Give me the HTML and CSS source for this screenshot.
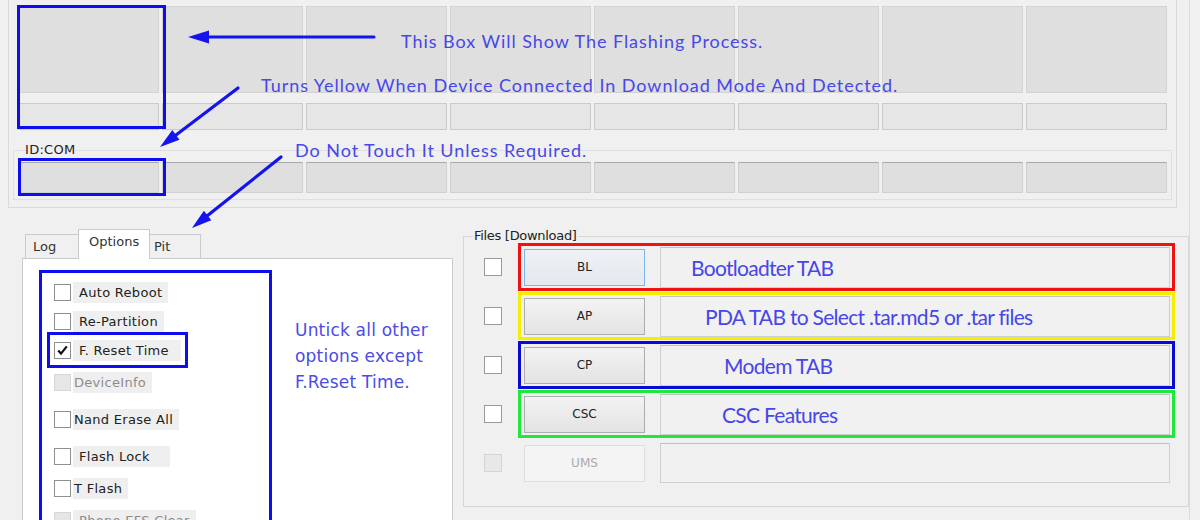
FILE: index.html
```html
<!DOCTYPE html>
<html lang="en">
<head>
    <meta charset="UTF-8">
    <meta name="viewport" content="width=device-width, initial-scale=1.0">
    <title>Odin - Options</title>
    <link rel="stylesheet" href="styles.css">
</head>
<body>

<div class="page">
    <div class="window">

        <!-- Device status boxes -->
        <div class="top-frame">
            <div class="cells">
                <div class="cell cell-big"></div>
                <div class="cell cell-big"></div>
                <div class="cell cell-big"></div>
                <div class="cell cell-big"></div>
                <div class="cell cell-big"></div>
                <div class="cell cell-big"></div>
                <div class="cell cell-big"></div>
                <div class="cell cell-big"></div>
                <div class="cell cell-small"></div>
                <div class="cell cell-small"></div>
                <div class="cell cell-small"></div>
                <div class="cell cell-small"></div>
                <div class="cell cell-small"></div>
                <div class="cell cell-small"></div>
                <div class="cell cell-small"></div>
                <div class="cell cell-small"></div>
            </div>
            <fieldset class="com-group">
                <legend>ID:COM</legend>
                <div class="cells cells-com">
                    <div class="cell cell-com"></div>
                    <div class="cell cell-com"></div>
                    <div class="cell cell-com"></div>
                    <div class="cell cell-com"></div>
                    <div class="cell cell-com"></div>
                    <div class="cell cell-com"></div>
                    <div class="cell cell-com"></div>
                    <div class="cell cell-com"></div>
                </div>
            </fieldset>
        </div>

        <div class="lower">
            <!-- Log / Options / Pit tabs -->
            <div class="tabs">
                <div class="tab-strip">
                    <div class="tab tab-log">Log</div>
                    <div class="tab tab-options tab-active">Options</div>
                    <div class="tab tab-pit">Pit</div>
                </div>
                <div class="tab-panel">
                    <div class="opt-box">
                        <div class="opt">
                            <span class="check"></span>
                            <span class="opt-label">Auto Reboot</span>
                        </div>
                        <div class="opt">
                            <span class="check"></span>
                            <span class="opt-label">Re-Partition</span>
                        </div>
                        <div class="opt opt-marked">
                            <span class="check">
                                <svg width="13" height="13" viewBox="0 0 13 13"><path d="M2.2 6.6 L5 9.6 L10.8 2.4" fill="none" stroke="#111" stroke-width="2.2"/></svg>
                            </span>
                            <span class="opt-label">F. Reset Time</span>
                        </div>
                        <div class="opt opt-off gap-s">
                            <span class="check"></span>
                            <span class="opt-label tight">DeviceInfo</span>
                        </div>
                        <div class="opt gap-l">
                            <span class="check"></span>
                            <span class="opt-label tight">Nand Erase All</span>
                        </div>
                        <div class="opt gap-l">
                            <span class="check"></span>
                            <span class="opt-label wide">Flash Lock</span>
                        </div>
                        <div class="opt gap-s">
                            <span class="check"></span>
                            <span class="opt-label tight">T Flash</span>
                        </div>
                        <div class="opt opt-off gap-s">
                            <span class="check"></span>
                            <span class="opt-label">Phone EFS Clear</span>
                        </div>
                    </div>
                    <p class="opt-note">Untick all other<br>options except<br>F.Reset Time.</p>
                </div>
            </div>

            <!-- Files [Download] -->
            <fieldset class="files">
                <legend>Files [Download]</legend>
                <div class="file-row">
                    <span class="check"></span>
                    <div class="slot slot-red">
                        <button class="file-btn btn-focus">BL</button>
                        <div class="file-path"><span class="note note-bl">Bootloadter TAB</span></div>
                    </div>
                </div>
                <div class="file-row">
                    <span class="check"></span>
                    <div class="slot slot-yellow">
                        <button class="file-btn">AP</button>
                        <div class="file-path"><span class="note note-ap">PDA TAB to Select .tar.md5 or .tar files</span></div>
                    </div>
                </div>
                <div class="file-row">
                    <span class="check"></span>
                    <div class="slot slot-blue">
                        <button class="file-btn">CP</button>
                        <div class="file-path"><span class="note note-cp">Modem TAB</span></div>
                    </div>
                </div>
                <div class="file-row">
                    <span class="check"></span>
                    <div class="slot slot-green">
                        <button class="file-btn">CSC</button>
                        <div class="file-path"><span class="note note-csc">CSC Features</span></div>
                    </div>
                </div>
                <div class="file-row row-off">
                    <span class="check"></span>
                    <div class="slot">
                        <button class="file-btn">UMS</button>
                        <div class="file-path"></div>
                    </div>
                </div>
            </fieldset>
        </div>
    </div>

    <!-- Annotation layer: boxes and arrows drawn over the window -->
    <svg class="marks" width="1200" height="520" viewBox="0 0 1200 520">
        <g fill="none" stroke="#0d0df0" stroke-width="3">
            <rect x="18.5" y="6.5" width="146" height="121"/>
            <rect x="19.5" y="159.5" width="145" height="35"/>
        </g>
        <g stroke="#1414ee" stroke-width="3.2" stroke-linecap="round">
            <line x1="374" y1="37" x2="206" y2="37"/>
            <line x1="238" y1="88" x2="176" y2="135"/>
            <line x1="281" y1="157" x2="207.6" y2="215.5"/>
        </g>
        <g fill="#1414ee">
            <polygon points="188,37 209,30.5 209,43.5"/>
            <polygon points="160,147 179.5,139.7 172.3,130.1"/>
            <polygon points="192,228 211.3,220.2 203.9,210.8"/>
        </g>
    </svg>
    <p class="note-top note-flash">This Box Will Show The Flashing Process.</p>
    <p class="note-top note-yellow">Turns Yellow When Device Connected In Download Mode And Detected.</p>
    <p class="note-top note-touch">Do Not Touch It Unless Required.</p>
</div>

</body>
</html>
```

FILE: styles.css
```css
body {
    margin: 0;
    background-color: #f0f0f0;
    font-family: "DejaVu Sans", sans-serif;
    color: #222;
}

.page {
    position: relative;
    width: 1200px;
    height: 520px;
    overflow: hidden;
}

.window {
    width: 1190px;
    height: 520px;
    box-sizing: border-box;
    border-right: 1px solid #dcdcdc;
}

/* Status boxes at the top */
.top-frame {
    margin-left: 8px;
    width: 1169px;
    height: 208px;
    box-sizing: border-box;
    border: 1px solid #dadada;
    border-top: 0;
    padding: 6px 0 0 9px;
}

.cells {
    display: grid;
    grid-template-columns: repeat(8, 141px);
    grid-template-rows: 87px 27px;
    column-gap: 3px;
    row-gap: 10px;
}

.cell {
    box-sizing: border-box;
    background-color: #dfdfdf;
    border: 1px solid #d3d3d3;
}

.cell-small {
    background-color: #e6e6e6;
    border-color: #cbcbcb;
}

.com-group {
    margin: 13px 4px 0 -5px;
    padding: 5px 4px 6px 4px;
    border: 1px solid #e0e0e0;
    min-width: 0;
}

.com-group legend {
    margin-left: 7px;
    padding: 0;
    font-size: 13px;
    line-height: 14px;
    letter-spacing: 0.3px;
}

.cells-com {
    grid-template-rows: 31px;
}

.cell-com {
    border-color: #d0d0d0;
    border-top-color: #a9a9a9;
}

.lower {
    display: flex;
    align-items: flex-start;
}

/* Tabs */
.tabs {
    margin: 21px 0 0 22px;
    width: 431px;
}

.tab-strip {
    display: flex;
    align-items: flex-end;
    height: 29px;
    padding-left: 3px;
    position: relative;
    z-index: 1;
}

.tab {
    height: 24px;
    box-sizing: border-box;
    border: 1px solid #cacaca;
    border-bottom: 0;
    background-color: #f0f0f0;
    padding: 4px 0 0 7px;
    font-size: 13px;
    color: #333;
}

.tab-log { width: 54px; }
.tab-options { width: 72px; padding-left: 10px; }
.tab-pit { width: 52px; padding-left: 4px; margin-left: -1px; }

.tab-active {
    height: 30px;
    margin-bottom: -1px;
    margin-left: -1px;
    padding-top: 4px;
    background-color: #fff;
}

.tab-panel {
    display: flex;
    align-items: flex-start;
    height: 300px;
    box-sizing: border-box;
    border: 1px solid #cacaca;
    background-color: #fff;
}

.opt-box {
    margin: 11px 0 0 16px;
    width: 233px;
    box-sizing: border-box;
    border: 3px solid #0d0df0;
    padding: 8px 0 40px 12px;
}

.opt {
    display: flex;
    align-items: center;
    height: 22px;
    width: max-content;
}

.opt + .opt { margin-top: 7px; }
.opt.gap-s { margin-top: 10px; }
.opt.gap-l { margin-top: 15px; }

.check {
    flex: none;
    display: flex;
    align-items: center;
    justify-content: center;
    width: 17px;
    height: 17px;
    box-sizing: border-box;
    border: 1px solid #8f8f8f;
    background-color: #fff;
}

.opt-label {
    margin-left: 2px;
    height: 21px;
    line-height: 21px;
    padding: 0 6px 0 6px;
    background-color: #efefef;
    font-size: 13px;
    letter-spacing: 0.3px;
}

.opt-label.tight { padding-left: 1px; }
.opt-label.wide { padding-right: 20px; }

.opt-off .check {
    background-color: #e6e6e6;
    border-color: #d6d6d6;
}

.opt-off .opt-label {
    color: #8c8c8c;
}

/* The one option that must stay ticked */
.opt-marked {
    outline: 3px solid #0d0df0;
    outline-offset: 4px;
}

.opt-marked .opt-label {
    padding-right: 12px;
}

.opt-note {
    margin: 58px 0 0 23px;
    font-size: 17px;
    line-height: 26px;
    letter-spacing: 0.2px;
    color: #4b4be6;
}

/* Files group */
.files {
    margin: 21px 0 0 10px;
    width: 726px;
    box-sizing: border-box;
    border: 1px solid #d6d6d6;
    padding: 0 0 19px 9px;
    min-width: 0;
}

.files legend {
    padding: 0 1px;
    font-size: 13px;
    line-height: 14px;
    letter-spacing: -0.3px;
}

.file-row {
    display: flex;
    align-items: center;
    height: 48px;
}

.file-row + .file-row { margin-top: 1px; }

.file-row .check {
    width: 18px;
    height: 18px;
    margin: 0 16px 0 11px;
    border-color: #9a9a9a;
}

.slot {
    display: flex;
    align-items: center;
    width: 657px;
    height: 48px;
    box-sizing: border-box;
    border: 3px solid transparent;
    padding: 0 2px 0 3px;
}

.slot-red { border-color: #f01212; }
.slot-yellow { border-color: #f6ee00; }
.slot-blue { border-color: #0a0ad6; }
.slot-green { border-color: #1ee83a; }

.file-btn {
    flex: none;
    width: 121px;
    height: 37px;
    padding: 0;
    border: 1px solid #adadad;
    border-radius: 0;
    background: linear-gradient(#f3f3f3, #e3e3e3);
    font-family: "DejaVu Sans", sans-serif;
    font-size: 12px;
    color: #222;
}

.btn-focus {
    border-color: #7db5e8;
    background: linear-gradient(#eef2f6, #e3e8ee);
}

.file-path {
    flex: 1;
    display: flex;
    align-items: center;
    height: 41px;
    margin-left: 15px;
    box-sizing: border-box;
    border: 1px solid #cfcfcf;
    border-top-color: #c2c2c2;
    background-color: #f1f1f1;
}

.note {
    font-family: Lato, sans-serif;
    font-size: 21px;
    letter-spacing: -0.7px;
    color: #4646ea;
    white-space: nowrap;
}

.note-bl { padding-left: 30px; }
.note-ap { padding-left: 44px; }
.note-cp { padding-left: 63px; }
.note-csc { padding-left: 61px; }

.row-off .check {
    background-color: #e8e8e8;
    border-color: #d4d4d4;
}

.row-off .file-btn {
    color: #a9a9a9;
    border-color: #dedede;
    background: #f4f4f4;
}

.row-off .file-path {
    width: 512px;
    height: 40px;
}

/* Annotations laid over the window */
.marks {
    position: absolute;
    left: 0;
    top: 0;
    pointer-events: none;
}

.note-top {
    position: absolute;
    margin: 0;
    font-family: Lato, sans-serif;
    font-size: 18px;
    line-height: 22px;
    letter-spacing: 0.95px;
    color: #4747ea;
    white-space: nowrap;
}

.note-flash { left: 401px; top: 30px; }
.note-yellow { left: 261px; top: 74px; }
.note-touch { left: 295px; top: 139px; }
```
